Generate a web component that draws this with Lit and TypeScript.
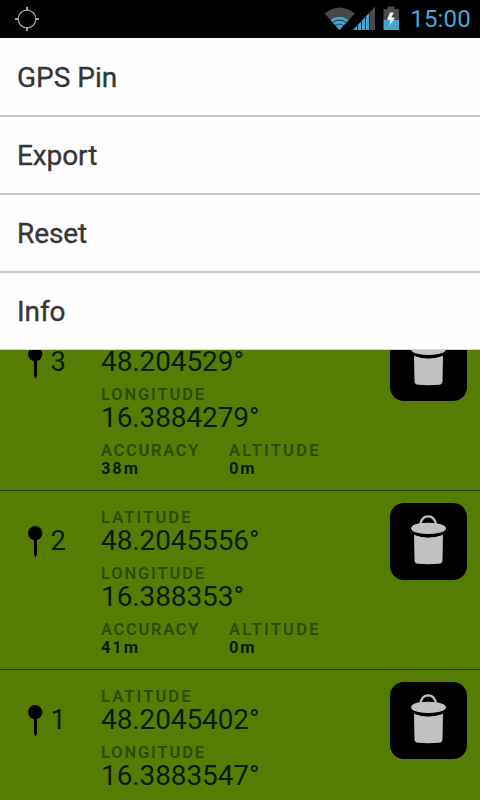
import { LitElement, html, css } from "lit";
import { customElement, property } from "lit/decorators.js";

@customElement("status-bar")
class StatusBar extends LitElement {
  static styles = css`
    :host { display: flex; height: 38px; background: #000; align-items: center; justify-content: space-between; box-sizing: border-box; padding: 0 9px 0 13px; }
    svg { display: block; flex: none; }
    .right { display: flex; align-items: center; height: 38px; }
    .clock { box-sizing: border-box; width: 70px; text-align: right; color: #48a9d3; font: 400 24px/39px Roboto, sans-serif; padding-top: 1px; letter-spacing: 0.2px; }
  `;
  render() {
    return html`
      <svg width="28" height="38" viewBox="13 0 28 38" fill="none" stroke="#a2a2a2">
        <circle cx="27" cy="19" r="8.8" stroke-width="1.3" />
        <path d="M27 7v4M27 27v4M15 19h4M35 19h4" stroke-width="2" />
      </svg>
      <div class="right">
        <svg width="77" height="38" viewBox="324 0 77 38">
          <path d="M339.500 30L324.500 13.500Q339.500 1.500 355 13.500Z" fill="#474747" />
          <path d="M339.500 30L330.500 20Q339.500 13.500 348.500 20Z" fill="#46a5ce" />
          <path d="M332.500 22.500Q339.500 17.500 346.500 22.500M335 25.500Q339.500 22.500 344 25.500" fill="none" stroke="#173c4c" stroke-width="1" />
          <path d="M353 30L370 12V30Z" fill="#46a5ce" />
          <path d="M370 12L375 6.500V30H370Z" fill="#4a4a4a" />
          <path d="M357.500 24V30M361.500 20V30M365.500 16V30M369.500 11V30" stroke="#123544" stroke-width="1" />
          <path d="M383.500 9H387.500V6.500H394.500V9H399V20H383.500Z" fill="#494949" />
          <path d="M383.500 20H399V30H383.500Z" fill="#46a5ce" />
          <path d="M390 12.500L387 19.500L390.500 20.500L389 26L395 18L391.500 17L394 12.500Z" fill="#eee" />
        </svg>
        <span class="clock">15:00</span>
      </div>
    `;
  }
}

@customElement("options-menu")
class OptionsMenu extends LitElement {
  static styles = css`
    :host { display: block; background: #fefefe; }
    .item { box-sizing: border-box; height: 78px; padding: 0 17px; border-bottom: 2px solid #c9c9c9; color: #363636; font: 400 28px/77px Roboto, sans-serif; letter-spacing: -0.1px; -webkit-text-stroke: 0.35px #363636; }
    .item:first-child { height: 79px; line-height: 79px; letter-spacing: 0; }
    .item:last-child { height: 77px; border-bottom: 1px solid #d5dcc6; }
  `;
  render() {
    return html`${["GPS Pin", "Export", "Reset", "Info"].map((t) => html`<div class="item">${t}</div>`)}`;
  }
}

interface Pin { id: number; lat: string; lon: string; accuracy?: string; altitude?: string; }

@customElement("pin-card")
class PinCard extends LitElement {
  @property({ attribute: false }) pin!: Pin;
  static styles = css`
    :host { display: flex; box-sizing: border-box; height: 179px; flex: none; border-bottom: 1px solid #203f0b; padding: 17px 13px 0 28px; color: #071d0a; font-family: Roboto, sans-serif; }
    .marker { display: flex; width: 73px; gap: 8px; padding-top: 18px; flex: none; }
    .number { font-size: 27.5px; line-height: 30px; margin-left: -0.5px; letter-spacing: -1px; }
    .details { flex: 1; }
    .label { font-size: 16.5px; font-weight: 600; line-height: 20px; letter-spacing: 2.1px; color: #2b4c04; }
    .longitude { letter-spacing: 1.85px; }
    .accuracy { letter-spacing: 1.7px; }
    .altitude { letter-spacing: 2.25px; }
    .value { font-size: 28px; line-height: 26px; margin-bottom: 10px; letter-spacing: -0.1px; }
    .small { font-size: 16.5px; font-weight: 700; line-height: 16px; letter-spacing: 1.9px; }
    .stats { display: grid; grid-template-columns: 128px 1fr; }
    .delete { width: 77px; height: 77px; border: 0; padding: 0; border-radius: 14px; background: #000; margin-top: -5px; flex: none; }
    svg { display: block; flex: none; }
  `;
  render() {
    const p = this.pin;
    return html`
      <div class="marker">
        <svg width="15" height="32" viewBox="0 0 15 32">
          <circle cx="7.200" cy="7.200" r="7.100" />
          <path d="M6 13H9V28L8 31H7L6 28Z" />
        </svg>
        <span class="number">${p.id}</span>
      </div>
      <div class="details">
        <div class="label">LATITUDE</div>
        <div class="value">${p.lat}°</div>
        <div class="label longitude">LONGITUDE</div>
        <div class="value">${p.lon}°</div>
        ${p.accuracy
          ? html`<div class="stats">
              <div><div class="label accuracy">ACCURACY</div><div class="small">${p.accuracy}</div></div>
              <div><div class="label altitude">ALTITUDE</div><div class="small">${p.altitude}</div></div>
            </div>`
          : null}
      </div>
      <button class="delete" aria-label="Delete">
        <svg width="77" height="77" viewBox="0 0 77 77" fill="#c1c1c1">
          <path d="M30.300 22C31 16.500 34 13.300 38.200 13.300S45.300 16.500 46 22" fill="none" stroke="#c1c1c1" stroke-width="2.200" />
          <path d="M28 20.500Q38 19 48 20.500Q56 22 56 25.500Q55.500 28 51 29.500Q38 32.500 26 29.500Q21.500 28 21 25Q22 21.500 28 20.500Z" />
          <path d="M24 31.500Q38 37.500 53 31.500L52.500 57.500Q52.300 60.300 49 60.800Q38 61.500 28 60.800Q24.700 60.300 24.500 57.500Z" />
          <path d="M23 29Q38 33.500 54 29L52.500 32Q38 36.500 24.500 32Z" fill="#000" />
        </svg>
      </button>
    `;
  }
}

@customElement("app-root")
class AppRoot extends LitElement {
  static styles = css`
    :host { display: flex; flex-direction: column; position: relative; height: 800px; overflow: hidden; background: #567d03; }
    .menu { position: absolute; top: 38px; left: 0; right: 0; }
    .list { display: flex; flex-direction: column; padding-top: 274px; }
  `;
  pins: Pin[] = [
    { id: 3, lat: "48.204529", lon: "16.3884279", accuracy: "38m", altitude: "0m" },
    { id: 2, lat: "48.2045556", lon: "16.388353", accuracy: "41m", altitude: "0m" },
    { id: 1, lat: "48.2045402", lon: "16.3883547" },
  ];
  render() {
    return html`
      <status-bar></status-bar>
      <div class="list">${this.pins.map((p) => html`<pin-card .pin=${p}></pin-card>`)}</div>
      <options-menu class="menu"></options-menu>
    `;
  }
}
